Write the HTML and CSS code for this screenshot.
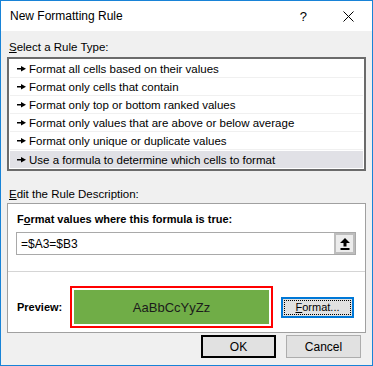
FILE: index.html
```html
<!DOCTYPE html>
<html lang="en">
<head>
  <meta charset="UTF-8">
  <title>New Formatting Rule</title>
  <link rel="stylesheet" href="styles.css">
</head>
<body>

  <div class="dialog">
    <div class="titlebar">
      <span class="title">New Formatting Rule</span>
      <span class="help">?</span>
      <span class="close">
        <svg width="11" height="11" viewBox="0 0 11 11"><path d="M0.5 0.5 L10.5 10.5 M10.5 0.5 L0.5 10.5" stroke="#000" stroke-width="1"/></svg>
      </span>
    </div>

    <div class="content">
      <div class="section-label"><u>S</u>elect a Rule Type:</div>

      <div class="rule-list">
        <div class="rule-item"><svg class="arrow" width="9" height="7" viewBox="0 0 9 7"><rect x="0" y="3" width="5" height="1.5" fill="#000"/><polygon points="4,1 9,3.75 4,6.5" fill="#000"/></svg>Format all cells based on their values</div>
        <div class="rule-item"><svg class="arrow" width="9" height="7" viewBox="0 0 9 7"><rect x="0" y="3" width="5" height="1.5" fill="#000"/><polygon points="4,1 9,3.75 4,6.5" fill="#000"/></svg>Format only cells that contain</div>
        <div class="rule-item"><svg class="arrow" width="9" height="7" viewBox="0 0 9 7"><rect x="0" y="3" width="5" height="1.5" fill="#000"/><polygon points="4,1 9,3.75 4,6.5" fill="#000"/></svg>Format only top or bottom ranked values</div>
        <div class="rule-item"><svg class="arrow" width="9" height="7" viewBox="0 0 9 7"><rect x="0" y="3" width="5" height="1.5" fill="#000"/><polygon points="4,1 9,3.75 4,6.5" fill="#000"/></svg>Format only values that are above or below average</div>
        <div class="rule-item"><svg class="arrow" width="9" height="7" viewBox="0 0 9 7"><rect x="0" y="3" width="5" height="1.5" fill="#000"/><polygon points="4,1 9,3.75 4,6.5" fill="#000"/></svg>Format only unique or duplicate values</div>
        <div class="rule-item selected"><svg class="arrow" width="9" height="7" viewBox="0 0 9 7"><rect x="0" y="3" width="5" height="1.5" fill="#000"/><polygon points="4,1 9,3.75 4,6.5" fill="#000"/></svg>Use a formula to determine which cells to format</div>
      </div>

      <div class="section-label second"><u>E</u>dit the Rule Description:</div>

      <div class="desc-box">
        <div class="formula-part">
          <div class="bold-label">F<u>o</u>rmat values where this formula is true:</div>
          <div class="formula-input">
            <span class="formula-text">=$A3=$B3</span>
            <span class="collapse-btn">
              <svg width="10" height="12" viewBox="0 0 10 12"><polygon points="5,0 10,5 6.5,5 6.5,8.5 3.5,8.5 3.5,5 0,5" fill="#000"/><rect x="0.5" y="10" width="9" height="2" fill="#000"/></svg>
            </span>
          </div>
        </div>
        <div class="preview-part">
          <span class="bold-label">Preview:</span>
          <div class="preview-box">
            <div class="preview-fill">AaBbCcYyZz</div>
          </div>
          <button class="btn format-btn"><span class="focus"><u>F</u>ormat...</span></button>
        </div>
      </div>

      <div class="dialog-buttons">
        <button class="btn ok-btn">OK</button>
        <button class="btn">Cancel</button>
      </div>
    </div>
  </div>

</body>
</html>
```

FILE: styles.css
```css
body {
  margin: 0;
  font-family: "Liberation Sans", Arial, sans-serif;
  font-size: 11.5px;
  color: #000;
}
.dialog {
  width: 373px;
  height: 366px;
  box-sizing: border-box;
  border: 1px solid #1883d7;
  background: #f0f0f0;
}
.titlebar {
  height: 30px;
  background: #fff;
  display: flex;
  align-items: center;
  padding-left: 9px;
}
.title {
  font-size: 12px;
  flex: 1;
}
.help {
  font-size: 13px;
  margin-right: 36px;
}
.close {
  display: flex;
  margin-right: 18px;
}
.content {
  padding: 0 6px;
}
.section-label {
  height: 16px;
  line-height: 16px;
  margin-top: 8px;
  margin-bottom: 2px;
  padding-left: 2px;
}
.section-label.second {
  margin-top: 15px;
  margin-bottom: 1px;
}
.rule-list {
  background: #fff;
  border: 2px solid #6b6b6b;
  padding: 1px 1px 0 1px;
  height: 109px;
  box-sizing: content-box;
}
.rule-item {
  height: 18px;
  box-sizing: border-box;
  border-bottom: 1px solid #f0f0f0;
  display: flex;
  align-items: center;
  padding-left: 7px;
}
.rule-item:last-child {
  border-bottom: none;
}
.rule-item.selected {
  background: #e1e1e6;
  border-top: 1px solid #fff;
}
.arrow {
  margin-right: 3px;
}
.desc-box {
  background: #fff;
  border: 1px solid #a0a0a0;
  height: 128px;
}
.formula-part {
  padding: 7px 9px 16px 8px;
  border-bottom: 1px solid #d5d5d5;
}
.bold-label {
  font-weight: bold;
  font-size: 11px;
  line-height: 16px;
  padding-left: 1px;
}
.formula-input {
  margin-top: 5px;
  height: 21px;
  border: 1px solid #a9a9a9;
  display: flex;
  align-items: center;
}
.formula-text {
  flex: 1;
  padding-left: 4px;
  font-size: 12px;
}
.collapse-btn {
  width: 17px;
  height: 17px;
  border: 2px solid #bdbdbd;
  background: #ececec;
  display: flex;
  align-items: center;
  justify-content: center;
}
.preview-part {
  display: flex;
  align-items: center;
  padding: 14px 0 6px 8px;
}
.preview-part .bold-label {
  width: 53px;
}
.preview-box {
  border: 2px solid #ff0000;
  padding: 2px;
  background: #fff;
}
.preview-fill {
  width: 195px;
  height: 34px;
  background: #70ad47;
  display: flex;
  align-items: center;
  justify-content: center;
  font-size: 13px;
  color: #1b1b1b;
}
.btn {
  font-family: "Liberation Sans", Arial, sans-serif;
  font-size: 12px;
  color: #000;
  background: #e1e1e1;
  border: 1px solid #adadad;
  width: 75px;
  height: 23px;
  padding: 0;
}
.format-btn {
  margin-left: 8px;
  width: 73px;
  height: 21px;
  border: 2px solid #0078d7;
  padding: 1px;
  font-size: 11px;
}
.format-btn .focus {
  display: flex;
  align-items: center;
  justify-content: center;
  height: 100%;
  box-sizing: border-box;
  border: 1px dotted #000;
}
.dialog-buttons {
  display: flex;
  justify-content: flex-end;
  gap: 10px;
  margin-top: 2px;
  padding-right: 5px;
}
.ok-btn {
  border: 2px solid #000;
}
```
